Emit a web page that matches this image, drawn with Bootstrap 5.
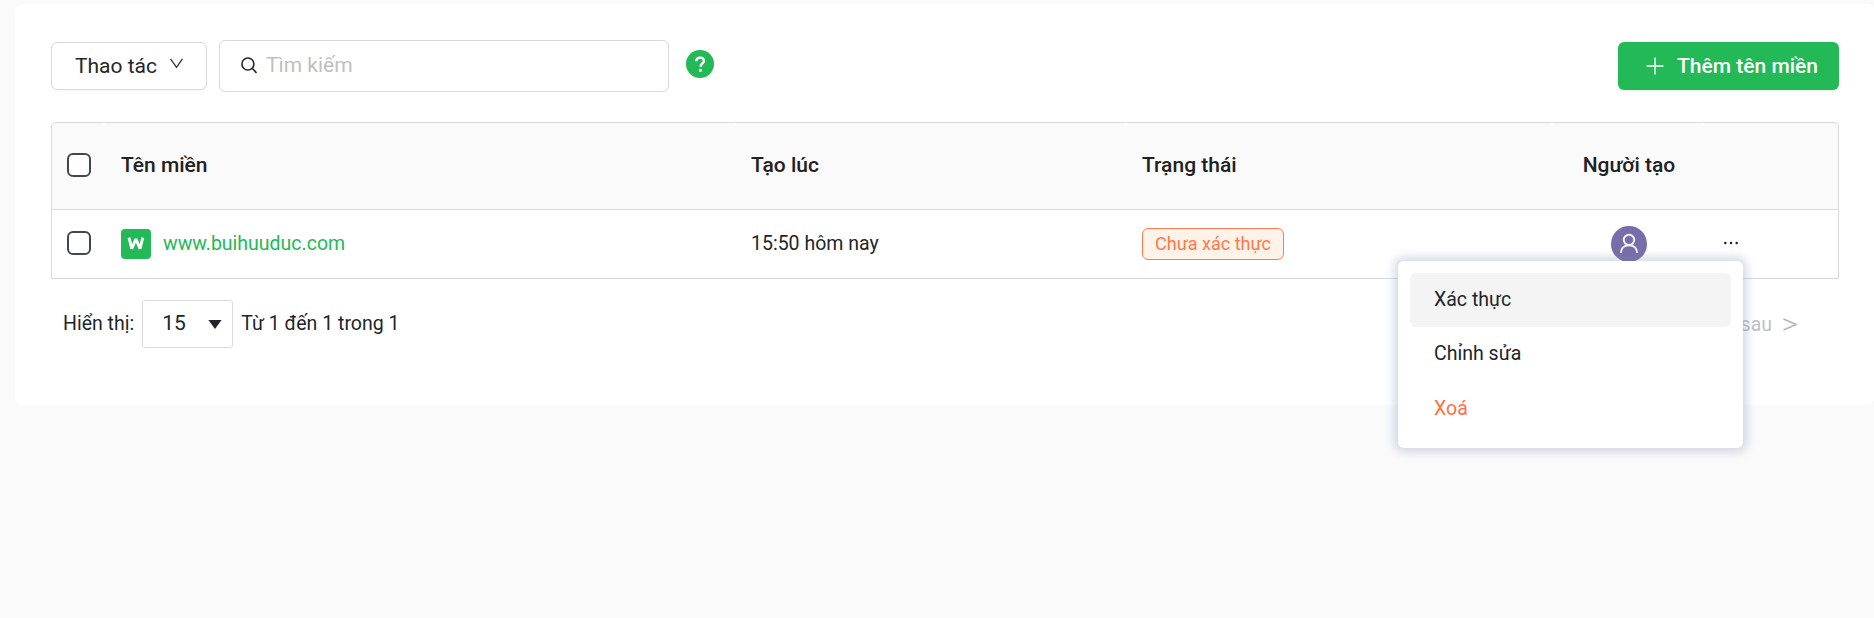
<!DOCTYPE html>
<html lang="vi">
<head>
<meta charset="utf-8">
<title>Tên miền</title>
<link href="https://cdn.jsdelivr.net/npm/bootstrap@5.3.0/dist/css/bootstrap.min.css" rel="stylesheet">
<style>
body{background:#fafafa;font-family:Roboto,"Noto Sans",sans-serif;font-size:19.5px;color:#212529;height:618px;overflow:hidden;line-height:1.5}
.panel{background:#fff;margin:4px 0 0 15px;height:401px;padding:36px 35px 0 36px;border-radius:6px}
.tools{height:52px;gap:12px}
.act{width:156px;height:48px;font-size:21px;color:#262626;border:1px solid #d9d9d9;border-radius:6px;background:#fff;padding:1px 0 0 23px;box-shadow:0 2px 0 rgba(0,0,0,.02)}
.act svg{margin:-7px 0 0 13px}
.find{width:450px;height:52px;border:1px solid #d9d9d9;border-radius:6px;padding:0 20px 0 21px}
.find svg{margin-top:-2px}
.find input{box-shadow:none!important;font-size:21px;padding:0 0 1px 0;margin-left:9px;background:none;color:#262626}
.find input::placeholder{color:#bfbfbf}
.add{width:221px;height:48px;background:#22b956!important;border:0;border-radius:6px;color:#fff;font-size:21px;padding:0 0 0 28px;box-shadow:0 2px 0 rgba(0,0,0,.045);font-weight:500;gap:13px;white-space:nowrap}
.add span{padding-top:2px}
.help{margin:-4px 0 0 5px}
.grid-wrap{margin-top:30px;border:1px solid #d9d9d9;border-radius:5px 5px 0 0;height:157px}
.grid-row{display:grid;grid-template-columns:54px 630px 391px 427px 150px 1fr;align-items:center}
.grid-row>div{padding-left:15px;white-space:nowrap}
.head-row{height:87px;background:#fafafa;border-bottom:1px solid #dcdde3;border-radius:5px 5px 0 0;font-size:21px;font-weight:500;color:#212121}
.head-row>div:not(:last-child){align-self:stretch;display:flex;align-items:center;background:radial-gradient(circle at 100% 0,#fff 3px,transparent 3.5px)}
.head-row>div:first-child{padding-bottom:2px}
.data-row{height:68px}
.data-row>div:first-child{padding-bottom:2px}
.form-check-input.tick{width:24px;height:24px;border:2px solid #3f4655;border-radius:6px;margin:0;box-shadow:none;display:block;background-color:#fff}
.site{color:#22b956;text-decoration:none;margin-left:12px}
.state{display:inline-block;width:142px;height:32px;border:1px solid #ff7a50;border-radius:6px;background:#fff2e8;color:#ff7849;font-size:18px;line-height:29px;text-align:center}
.dots{margin:0 0 3px 4px}
.foot{margin:21px 0 0 12px;height:48px}
.size-box{width:91px;height:48px;border:1px solid #d9d9d9;border-radius:3px;margin:0 8px 0 8px;padding-left:19px;font-size:21px}
.size-box svg{margin-left:22px}
.next{color:#bfbfbf;margin-right:42px;padding-top:1px}
.next svg{margin-left:11px}
.pop.dropdown-menu{left:1398px;top:261px;width:345px;height:187px;padding:12px;border:0;border-radius:6px;box-shadow:0 0 10px 4px rgba(120,138,185,.32);font-size:19.5px}
.pop .dropdown-item{height:54px;padding:0 24px;border-radius:6px;color:#212529;display:flex;align-items:center}
.pop .hot{background:#f4f4f4}
.pop .del{color:#ff7043;margin-top:1px}
</style>
</head>
<body>
<main class="panel">
  <div class="tools d-flex align-items-center">
    <button class="btn act d-flex align-items-center text-nowrap">Thao tác
      <svg width="13" height="11" viewBox="0 0 13 11" fill="none" stroke="#333" stroke-width="1.3"><path d="M.6.8 6.5 9.3 12.4.8"/></svg>
    </button>
    <div class="find d-flex align-items-center">
      <svg class="flex-shrink-0" width="16" height="17" viewBox="0 0 16 17" fill="none" stroke="#262626" stroke-width="1.6"><circle cx="6.9" cy="7" r="6"/><path d="m11.2 11.3 4.3 4.7"/></svg>
      <input class="form-control border-0" placeholder="Tìm kiếm">
    </div>
    <svg class="help" width="28" height="28" viewBox="0 0 28 28"><circle cx="14" cy="14" r="14" fill="#22b956"/><path d="M10.3 11.3c0-2.4 1.5-3.7 3.9-3.7 2.3 0 3.7 1.3 3.7 3.3 0 2.7-3.4 2.6-3.4 5.8" fill="none" stroke="#fff" stroke-width="2.4"/><rect x="13" y="18.8" width="2.9" height="2.9" rx=".8" fill="#fff"/></svg>
    <button class="btn add d-flex align-items-center ms-auto">
      <svg width="18" height="18" viewBox="0 0 18 18" stroke="#fff" stroke-width="1.4"><path d="M9 .5v17M.5 9h17"/></svg><span>Thêm tên miền</span>
    </button>
  </div>

  <div class="grid-wrap">
    <div class="grid-row head-row">
      <div><input type="checkbox" class="form-check-input tick"></div>
      <div>Tên miền</div><div>Tạo lúc</div><div>Trạng thái</div>
      <div class="justify-content-center ps-0">Người tạo</div><div></div>
    </div>
    <div class="grid-row data-row">
      <div><input type="checkbox" class="form-check-input tick"></div>
      <div class="d-flex align-items-center">
        <svg width="30" height="30" viewBox="0 0 30 30"><rect width="30" height="30" rx="4" fill="#22b956"/><path d="M8 8.6 10.8 19.6 14.9 10 19 19.6 21.8 8.6" fill="none" stroke="#fff" stroke-width="2.9" stroke-linejoin="bevel"/></svg>
        <a class="site" href="#">www.buihuuduc.com</a>
      </div>
      <div>15:50 hôm nay</div>
      <div><span class="state align-middle">Chưa xác thực</span></div>
      <div class="d-flex justify-content-center ps-0">
        <svg width="36" height="36" viewBox="0 0 36 36"><circle cx="18" cy="18" r="18" fill="#786da8"/><g fill="none" stroke="#f3f3f3" stroke-width="2"><circle cx="18" cy="13.9" r="5.2"/><path d="M9.8 27c.2-4.7 3.4-7.8 8.2-7.8s8 3.1 8.2 7.8"/></g></svg>
      </div>
      <div><svg class="dots d-block" width="16" height="4" viewBox="0 0 16 4" fill="#222"><circle cx="2.3" cy="2" r="1.25"/><circle cx="8" cy="2" r="1.25"/><circle cx="13.7" cy="2" r="1.25"/></svg></div>
    </div>
  </div>

  <div class="foot d-flex align-items-center">
    <span>Hiển thị:</span>
    <div class="size-box d-flex align-items-center">15
      <svg width="14" height="9" viewBox="0 0 14 9"><path d="M.4 0h13.2L7 9z" fill="#212529"/></svg>
    </div>
    <span>Từ 1 đến 1 trong 1</span>
    <span class="next ms-auto d-flex align-items-center">sau
      <svg width="14" height="13" viewBox="0 0 14 13" fill="none" stroke="#b5b5b5" stroke-width="1.5"><path d="M.5 1 13 6.5.5 12"/></svg>
    </span>
  </div>
</main>

<div class="pop dropdown-menu show">
  <a class="dropdown-item hot" href="#">Xác thực</a>
  <a class="dropdown-item" href="#">Chỉnh sửa</a>
  <a class="dropdown-item del" href="#">Xoá</a>
</div>
<script src="https://cdn.jsdelivr.net/npm/bootstrap@5.3.0/dist/js/bootstrap.bundle.min.js"></script>
</body>
</html>
